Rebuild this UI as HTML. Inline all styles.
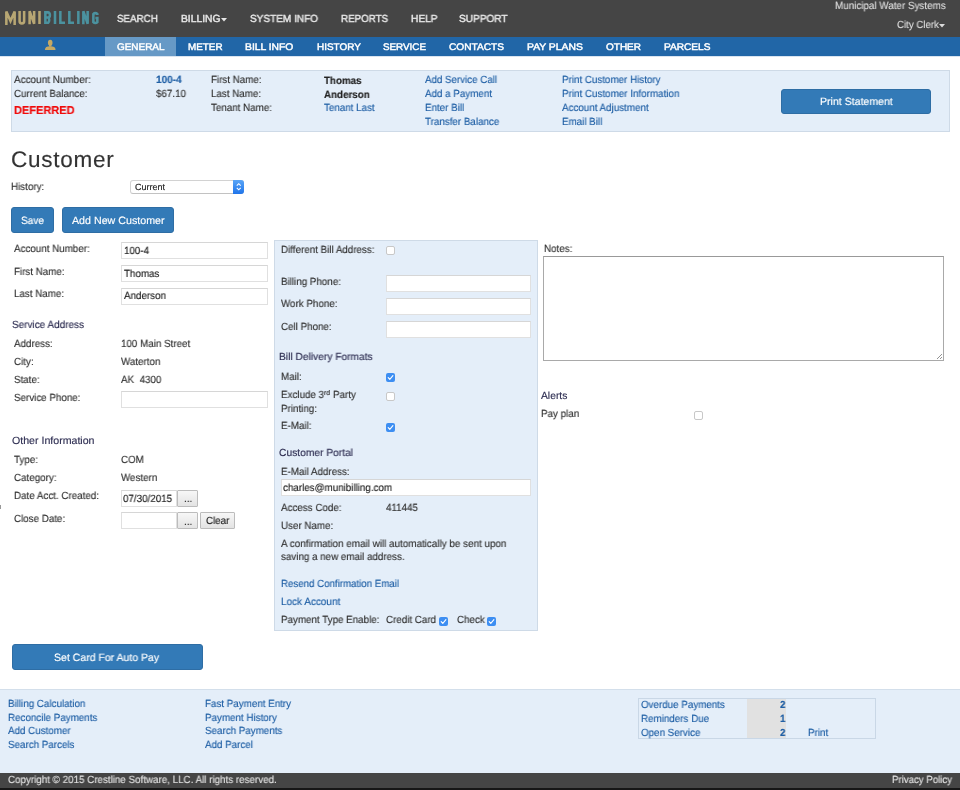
<!DOCTYPE html>
<html><head><meta charset="utf-8"><title>MuniBilling - Customer</title>
<style>
html,body{margin:0;padding:0;}
body{width:960px;height:790px;position:relative;overflow:hidden;background:#fff;font-family:"Liberation Sans",sans-serif;}
.t{position:absolute;white-space:nowrap;line-height:1;transform-origin:0 50%;will-change:transform;text-rendering:geometricPrecision;-webkit-text-stroke:0.15px currentColor;}
.b{position:absolute;box-sizing:border-box;}
.inp{position:absolute;box-sizing:border-box;background:#fff;border:1px solid #e0e0e0;border-top-color:#d6d6d6;}
.btn{position:absolute;box-sizing:border-box;background:#337ab7;border:1px solid #2e6da4;border-radius:3px;}
.cb{position:absolute;box-sizing:border-box;width:9px;height:9px;border-radius:2px;background:#fff;border:1px solid #c8c8c8;}
.cbc{position:absolute;box-sizing:border-box;width:9px;height:9px;border-radius:2px;background:#3d8ef2;}
.sbtn{position:absolute;box-sizing:border-box;background:linear-gradient(#f7f7f7,#e3e3e3);border:1px solid #bcbcbc;border-radius:1px;}
</style></head><body>
<!-- header -->
<div class="b" style="left:0;top:0;width:960px;height:37px;background:#454545;"></div>
<svg style="position:absolute;left:0;top:0" width="110" height="37">
<g fill="none" stroke-width="2.55" stroke-linejoin="miter">
<path stroke="#b7a673" d="M6.35 25 V11.4 L10.5 21 L14.65 11.4 V25 M19.6 11 V21.3 A2.275 2.1 0 0 0 24.15 21.3 V11 M29.6 24.2 V11.2 L34.15 23.8 V11 M39.5 11 V24"/>
<path stroke="#4b929f" d="M45.35 11 V24 M45.35 12.35 H48 A1.9 2.6 0 0 1 48 17.55 H45.35 M45.35 17.55 H48.2 A1.95 2.9 0 0 1 48.2 22.65 H45.35 M55 11 V24 M60.35 11 V24 M60.35 22.65 H65 M69.35 11 V24 M69.35 22.65 H74 M78.35 11 V24 M83.35 24.2 V11.2 L87.65 23.8 V11 M97.35 15 V14 A2.65 2.6 0 0 0 93.35 14 V22.2 A2.65 2.6 0 0 0 97.35 22.2 V18 H95.4"/>
</g>
</svg>
<svg style="position:absolute;left:221px;top:18px" width="8" height="4"><path d="M0 0H6L3 3.5Z" fill="#e6e6e6"/></svg>
<svg style="position:absolute;left:939px;top:23.5px" width="8" height="4"><path d="M0 0H6L3 3.5Z" fill="#dcdcdc"/></svg>
<!-- nav -->
<div class="b" style="left:0;top:37px;width:960px;height:19px;background:#2166a7;"></div>
<div class="b" style="left:0;top:56px;width:960px;height:1px;background:#d9e4f0;"></div>
<div class="b" style="left:105px;top:37px;width:71px;height:19px;background:#6699c6;"></div>
<svg style="position:absolute;left:44px;top:39px" width="13" height="12">
  <ellipse cx="6.2" cy="3.7" rx="2.3" ry="3" fill="#c6a964"/>
  <path d="M0.9 11 C0.9 8.2 2.8 7.2 6.2 7.2 C9.6 7.2 11.6 8.2 11.6 11 Z" fill="#c6a964"/>
  <rect x="5" y="6" width="2.4" height="1.6" fill="#c6a964"/>
</svg>
<div class="b" style="left:0;top:505px;width:1px;height:4px;background:#999;"></div>
<!-- top panel -->
<div class="b" style="left:11px;top:70px;width:939px;height:62px;background:#e4eef9;border:1px solid #cedae7;"></div>
<div class="btn" style="left:781px;top:88.5px;width:150px;height:25.5px;"></div>
<!-- history select -->
<div class="b" style="left:129.5px;top:180px;width:114.5px;height:13.5px;background:#fff;border:1px solid #d2d2d2;border-bottom-color:#c2c2c2;border-radius:3px;"></div>
<div class="b" style="left:232.5px;top:180px;width:11.5px;height:13.5px;background:linear-gradient(#5aa5f7,#1f74ea);border-radius:0 3px 3px 0;"></div>
<svg style="position:absolute;left:232.5px;top:180px" width="11.5" height="13.5"><path d="M3.8 5.6L5.75 3.7L7.7 5.6M3.8 7.9L5.75 9.8L7.7 7.9" stroke="#fff" stroke-width="1.15" fill="none"/></svg>
<div class="btn" style="left:11px;top:207px;width:43px;height:25.5px;"></div>
<div class="btn" style="left:62.3px;top:207px;width:111.7px;height:25.5px;"></div>
<!-- left inputs -->
<div class="inp" style="left:121px;top:242.4px;width:147px;height:17px;"></div>
<div class="inp" style="left:121px;top:265px;width:147px;height:17.4px;"></div>
<div class="inp" style="left:121px;top:287.6px;width:147px;height:17px;"></div>
<div class="inp" style="left:121px;top:391.2px;width:147px;height:17px;"></div>
<div class="inp" style="left:121px;top:490px;width:56px;height:17px;"></div>
<div class="sbtn" style="left:177px;top:490px;width:21px;height:17px;"></div>
<div class="inp" style="left:121px;top:512.3px;width:56px;height:17.2px;"></div>
<div class="sbtn" style="left:177px;top:512.3px;width:21px;height:17.2px;"></div>
<div class="sbtn" style="left:200px;top:512.3px;width:35px;height:17.2px;"></div>
<!-- middle panel -->
<div class="b" style="left:274px;top:240px;width:263.5px;height:391px;background:#e4eef9;border:1px solid #cedae7;"></div>
<div class="cb" style="left:385.8px;top:246.3px;"></div>
<div class="inp" style="left:386px;top:275px;width:144.6px;height:17.4px;"></div>
<div class="inp" style="left:386px;top:298px;width:144.6px;height:17.3px;"></div>
<div class="inp" style="left:386px;top:320.7px;width:144.6px;height:17px;"></div>
<div class="cbc" style="left:385.8px;top:373.2px;"><svg width="9" height="9" style="position:absolute;left:0;top:0"><path d="M2.2 4.6L3.8 6.3L6.9 2.6" stroke="#fff" stroke-width="1.1" fill="none" stroke-linecap="round" stroke-linejoin="round"/></svg></div>
<div class="cb" style="left:385.8px;top:391.5px;"></div>
<div class="cbc" style="left:385.8px;top:423px;"><svg width="9" height="9" style="position:absolute;left:0;top:0"><path d="M2.2 4.6L3.8 6.3L6.9 2.6" stroke="#fff" stroke-width="1.1" fill="none" stroke-linecap="round" stroke-linejoin="round"/></svg></div>
<div class="inp" style="left:281.3px;top:479.4px;width:249.3px;height:16.8px;"></div>
<div class="cbc" style="left:439.3px;top:617px;"><svg width="9" height="9" style="position:absolute;left:0;top:0"><path d="M2.2 4.6L3.8 6.3L6.9 2.6" stroke="#fff" stroke-width="1.1" fill="none" stroke-linecap="round" stroke-linejoin="round"/></svg></div>
<div class="cbc" style="left:487px;top:617px;"><svg width="9" height="9" style="position:absolute;left:0;top:0"><path d="M2.2 4.6L3.8 6.3L6.9 2.6" stroke="#fff" stroke-width="1.1" fill="none" stroke-linecap="round" stroke-linejoin="round"/></svg></div>
<!-- right -->
<div class="b" style="left:543px;top:256px;width:401px;height:105px;background:#fff;border:1px solid #a9a9a9;border-top-color:#999;"></div>
<svg style="position:absolute;left:936px;top:353px" width="7" height="7"><path d="M1 6L6 1M4 6L6 4" stroke="#777" stroke-width="0.8"/></svg>
<div class="cb" style="left:694px;top:410.7px;"></div>
<!-- set card -->
<div class="btn" style="left:11.5px;top:644.3px;width:191.3px;height:25.7px;"></div>
<!-- footer -->
<div class="b" style="left:0;top:688.5px;width:960px;height:85px;background:#e4eef9;border-top:1px solid #d3dfeb;"></div>
<div class="b" style="left:638.4px;top:698.4px;width:237.3px;height:40.7px;border:1px solid #c9d7e6;"></div>
<div class="b" style="left:746.8px;top:699.4px;width:39.6px;height:38.7px;background:#e1e1e1;"></div>
<div class="b" style="left:0;top:773px;width:960px;height:17px;background:#454545;"></div>
<div class="b" style="left:0;top:787.5px;width:960px;height:2.5px;background:#161616;"></div>

<div class="t" style="left:116.70px;top:15.00px;font-size:10.3px;color:#e6e6e6;transform:scaleX(0.9508);-webkit-text-stroke:0.45px currentColor;">SEARCH</div>
<div class="t" style="left:180.60px;top:15.00px;font-size:10.3px;color:#e6e6e6;transform:scaleX(1.0003);-webkit-text-stroke:0.45px currentColor;">BILLING</div>
<div class="t" style="left:250.00px;top:15.00px;font-size:10.3px;color:#e6e6e6;transform:scaleX(0.9743);-webkit-text-stroke:0.45px currentColor;">SYSTEM INFO</div>
<div class="t" style="left:341.00px;top:15.00px;font-size:10.3px;color:#e6e6e6;transform:scaleX(0.9478);-webkit-text-stroke:0.45px currentColor;">REPORTS</div>
<div class="t" style="left:411.00px;top:15.00px;font-size:10.3px;color:#e6e6e6;transform:scaleX(0.9852);-webkit-text-stroke:0.45px currentColor;">HELP</div>
<div class="t" style="left:459.00px;top:15.00px;font-size:10.3px;color:#e6e6e6;transform:scaleX(0.9801);-webkit-text-stroke:0.45px currentColor;">SUPPORT</div>
<div class="t" style="left:835.00px;top:2.00px;font-size:10.4px;color:#dcdcdc;transform:scaleX(0.9475);">Municipal Water Systems</div>
<div class="t" style="left:896.60px;top:21.00px;font-size:10.4px;color:#dcdcdc;transform:scaleX(0.9328);">City Clerk</div>
<div class="t" style="left:116.70px;top:43.00px;font-size:9.6px;color:#ffffff;transform:scaleX(1.0360);-webkit-text-stroke:0.45px currentColor;">GENERAL</div>
<div class="t" style="left:187.50px;top:43.00px;font-size:9.6px;color:#ffffff;transform:scaleX(1.0275);-webkit-text-stroke:0.45px currentColor;">METER</div>
<div class="t" style="left:245.00px;top:43.00px;font-size:9.6px;color:#ffffff;transform:scaleX(1.0757);-webkit-text-stroke:0.45px currentColor;">BILL INFO</div>
<div class="t" style="left:316.60px;top:43.00px;font-size:9.6px;color:#ffffff;transform:scaleX(1.0356);-webkit-text-stroke:0.45px currentColor;">HISTORY</div>
<div class="t" style="left:383.00px;top:43.00px;font-size:9.6px;color:#ffffff;transform:scaleX(1.0252);-webkit-text-stroke:0.45px currentColor;">SERVICE</div>
<div class="t" style="left:448.70px;top:43.00px;font-size:9.6px;color:#ffffff;transform:scaleX(1.0566);-webkit-text-stroke:0.45px currentColor;">CONTACTS</div>
<div class="t" style="left:527.00px;top:43.00px;font-size:9.6px;color:#ffffff;transform:scaleX(1.0790);-webkit-text-stroke:0.45px currentColor;">PAY PLANS</div>
<div class="t" style="left:605.80px;top:43.00px;font-size:9.6px;color:#ffffff;transform:scaleX(1.0423);-webkit-text-stroke:0.45px currentColor;">OTHER</div>
<div class="t" style="left:663.50px;top:43.00px;font-size:9.6px;color:#ffffff;transform:scaleX(1.0550);-webkit-text-stroke:0.45px currentColor;">PARCELS</div>
<div class="t" style="left:14.10px;top:76.00px;font-size:10.4px;color:#333;transform:scaleX(0.9561);">Account Number:</div>
<div class="t" style="left:14.10px;top:90.00px;font-size:10.4px;color:#333;transform:scaleX(0.9429);">Current Balance:</div>
<div class="t" style="left:14.20px;top:106.00px;font-size:11.5px;color:#f00a0a;font-weight:bold;transform:scaleX(0.9564);">DEFERRED</div>
<div class="t" style="left:156.30px;top:76.00px;font-size:10.4px;color:#1f5fa5;font-weight:bold;transform:scaleX(0.9671);">100-4</div>
<div class="t" style="left:156.30px;top:90.00px;font-size:10.4px;color:#333;transform:scaleX(0.9440);">$67.10</div>
<div class="t" style="left:211.00px;top:76.00px;font-size:10.4px;color:#333;transform:scaleX(0.9429);">First Name:</div>
<div class="t" style="left:211.00px;top:90.00px;font-size:10.4px;color:#333;transform:scaleX(0.9429);">Last Name:</div>
<div class="t" style="left:211.00px;top:104.00px;font-size:10.4px;color:#333;transform:scaleX(0.9429);">Tenant Name:</div>
<div class="t" style="left:324.30px;top:77.00px;font-size:10.4px;color:#222;font-weight:bold;transform:scaleX(0.9429);">Thomas</div>
<div class="t" style="left:324.30px;top:91.00px;font-size:10.4px;color:#222;font-weight:bold;transform:scaleX(0.9429);">Anderson</div>
<div class="t" style="left:324.30px;top:104.00px;font-size:10.4px;color:#1f5fa5;transform:scaleX(0.9437);">Tenant Last</div>
<div class="t" style="left:425.00px;top:76.00px;font-size:10.4px;color:#1f5fa5;transform:scaleX(0.9374);">Add Service Call</div>
<div class="t" style="left:425.00px;top:90.00px;font-size:10.4px;color:#1f5fa5;transform:scaleX(0.9429);">Add a Payment</div>
<div class="t" style="left:425.00px;top:104.00px;font-size:10.4px;color:#1f5fa5;transform:scaleX(0.9429);">Enter Bill</div>
<div class="t" style="left:425.00px;top:118.00px;font-size:10.4px;color:#1f5fa5;transform:scaleX(0.9429);">Transfer Balance</div>
<div class="t" style="left:561.60px;top:76.00px;font-size:10.4px;color:#1f5fa5;transform:scaleX(0.9429);">Print Customer History</div>
<div class="t" style="left:561.60px;top:90.00px;font-size:10.4px;color:#1f5fa5;transform:scaleX(0.9456);">Print Customer Information</div>
<div class="t" style="left:561.60px;top:104.00px;font-size:10.4px;color:#1f5fa5;transform:scaleX(0.9429);">Account Adjustment</div>
<div class="t" style="left:561.60px;top:118.00px;font-size:10.4px;color:#1f5fa5;transform:scaleX(0.9429);">Email Bill</div>
<div class="t" style="left:820.00px;top:97.00px;font-size:10.6px;color:#fff;transform:scaleX(0.9957);">Print Statement</div>
<div class="t" style="left:11.00px;top:149.00px;font-size:22.5px;color:#333;letter-spacing:0.75px;">Customer</div>
<div class="t" style="left:11.40px;top:183.00px;font-size:10.4px;color:#333;transform:scaleX(0.9429);">History:</div>
<div class="t" style="left:135.00px;top:183.00px;font-size:9px;color:#222;">Current</div>
<div class="t" style="left:21.00px;top:216.00px;font-size:10.6px;color:#fff;transform:scaleX(0.9525);">Save</div>
<div class="t" style="left:72.00px;top:216.00px;font-size:10.6px;color:#fff;transform:scaleX(1.0071);">Add New Customer</div>
<div class="t" style="left:13.70px;top:245.00px;font-size:10.4px;color:#333;transform:scaleX(0.9429);">Account Number:</div>
<div class="t" style="left:13.70px;top:268.00px;font-size:10.4px;color:#333;transform:scaleX(0.9429);">First Name:</div>
<div class="t" style="left:13.70px;top:290.00px;font-size:10.4px;color:#333;transform:scaleX(0.9429);">Last Name:</div>
<div class="t" style="left:123.80px;top:247.00px;font-size:10.4px;color:#222;transform:scaleX(0.9429);">100-4</div>
<div class="t" style="left:123.80px;top:270.00px;font-size:10.4px;color:#222;transform:scaleX(0.9429);">Thomas</div>
<div class="t" style="left:123.80px;top:292.00px;font-size:10.4px;color:#222;transform:scaleX(0.9429);">Anderson</div>
<div class="t" style="left:11.70px;top:321.00px;font-size:10.4px;color:#2e2e52;transform:scaleX(0.9583);">Service Address</div>
<div class="t" style="left:13.70px;top:340.00px;font-size:10.4px;color:#333;transform:scaleX(0.9429);">Address:</div>
<div class="t" style="left:13.70px;top:358.00px;font-size:10.4px;color:#333;transform:scaleX(0.9429);">City:</div>
<div class="t" style="left:13.70px;top:376.00px;font-size:10.4px;color:#333;transform:scaleX(0.9429);">State:</div>
<div class="t" style="left:13.70px;top:394.00px;font-size:10.4px;color:#333;transform:scaleX(0.9429);">Service Phone:</div>
<div class="t" style="left:121.00px;top:340.00px;font-size:10.4px;color:#333;transform:scaleX(0.9429);">100 Main Street</div>
<div class="t" style="left:121.00px;top:358.00px;font-size:10.4px;color:#333;transform:scaleX(0.9429);">Waterton</div>
<div class="t" style="left:121.00px;top:376.00px;font-size:10.4px;color:#333;transform:scaleX(0.9429);white-space:pre;">AK  4300</div>
<div class="t" style="left:11.70px;top:437.00px;font-size:10.4px;color:#2e2e52;transform:scaleX(1.0204);">Other Information</div>
<div class="t" style="left:13.70px;top:456.00px;font-size:10.4px;color:#333;transform:scaleX(0.9429);">Type:</div>
<div class="t" style="left:13.70px;top:474.00px;font-size:10.4px;color:#333;transform:scaleX(0.9429);">Category:</div>
<div class="t" style="left:13.70px;top:492.00px;font-size:10.4px;color:#333;transform:scaleX(0.9429);">Date Acct. Created:</div>
<div class="t" style="left:13.70px;top:515.00px;font-size:10.4px;color:#333;transform:scaleX(0.9429);">Close Date:</div>
<div class="t" style="left:121.00px;top:456.00px;font-size:10.4px;color:#333;transform:scaleX(0.9429);">COM</div>
<div class="t" style="left:121.00px;top:474.00px;font-size:10.4px;color:#333;transform:scaleX(0.9429);">Western</div>
<div class="t" style="left:123.00px;top:495.00px;font-size:10.4px;color:#222;transform:scaleX(0.9429);">07/30/2015</div>
<div class="t" style="left:183.50px;top:495.00px;font-size:10.4px;color:#222;transform:scaleX(0.9429);">...</div>
<div class="t" style="left:183.50px;top:518.00px;font-size:10.4px;color:#222;transform:scaleX(0.9429);">...</div>
<div class="t" style="left:206.00px;top:517.00px;font-size:10.4px;color:#222;transform:scaleX(0.9429);">Clear</div>
<div class="t" style="left:280.75px;top:246.00px;font-size:10.4px;color:#333;transform:scaleX(0.9429);">Different Bill Address:</div>
<div class="t" style="left:280.75px;top:278.00px;font-size:10.4px;color:#333;transform:scaleX(0.9429);">Billing Phone:</div>
<div class="t" style="left:280.75px;top:300.00px;font-size:10.4px;color:#333;transform:scaleX(0.9429);">Work Phone:</div>
<div class="t" style="left:280.75px;top:323.00px;font-size:10.4px;color:#333;transform:scaleX(0.9429);">Cell Phone:</div>
<div class="t" style="left:278.90px;top:353.00px;font-size:10.3px;color:#2e2e52;transform:scaleX(0.9915);">Bill Delivery Formats</div>
<div class="t" style="left:280.75px;top:373.00px;font-size:10.4px;color:#333;transform:scaleX(0.9429);">Mail:</div>
<div class="t" style="left:280.75px;top:391.00px;font-size:10.4px;color:#333;transform:scaleX(0.9429);">Exclude 3</div>
<div class="t" style="left:280.75px;top:405.00px;font-size:10.4px;color:#333;transform:scaleX(0.9429);">Printing:</div>
<div class="t" style="left:280.75px;top:422.00px;font-size:10.4px;color:#333;transform:scaleX(0.9429);">E-Mail:</div>
<div class="t" style="left:278.90px;top:449.00px;font-size:10.3px;color:#2e2e52;transform:scaleX(0.9947);">Customer Portal</div>
<div class="t" style="left:280.75px;top:468.00px;font-size:10.4px;color:#333;transform:scaleX(0.9429);">E-Mail Address:</div>
<div class="t" style="left:283.20px;top:484.00px;font-size:10.4px;color:#222;transform:scaleX(0.9429);">charles@munibilling.com</div>
<div class="t" style="left:280.75px;top:504.00px;font-size:10.4px;color:#333;transform:scaleX(0.9429);">Access Code:</div>
<div class="t" style="left:386.00px;top:504.00px;font-size:10.4px;color:#333;transform:scaleX(0.9429);">411445</div>
<div class="t" style="left:280.75px;top:522.00px;font-size:10.4px;color:#333;transform:scaleX(0.9429);">User Name:</div>
<div class="t" style="left:281.00px;top:540.00px;font-size:10.4px;color:#333;transform:scaleX(0.9498);">A confirmation email will automatically be sent upon</div>
<div class="t" style="left:281.00px;top:553.00px;font-size:10.4px;color:#333;transform:scaleX(0.9429);">saving a new email address.</div>
<div class="t" style="left:281.00px;top:580.00px;font-size:10.4px;color:#1f5fa5;transform:scaleX(0.9330);">Resend Confirmation Email</div>
<div class="t" style="left:281.00px;top:598.00px;font-size:10.4px;color:#1f5fa5;transform:scaleX(0.9587);">Lock Account</div>
<div class="t" style="left:281.00px;top:616.00px;font-size:10.4px;color:#333;transform:scaleX(0.9429);">Payment Type Enable:</div>
<div class="t" style="left:386.00px;top:616.00px;font-size:10.4px;color:#333;transform:scaleX(0.9429);">Credit Card</div>
<div class="t" style="left:456.50px;top:616.00px;font-size:10.4px;color:#333;transform:scaleX(0.9429);">Check</div>
<div class="t" style="left:543.90px;top:245.00px;font-size:10.4px;color:#333;transform:scaleX(0.9429);">Notes:</div>
<div class="t" style="left:541.40px;top:392.00px;font-size:10.3px;color:#2e2e52;">Alerts</div>
<div class="t" style="left:541.40px;top:410.00px;font-size:10.4px;color:#333;transform:scaleX(0.9429);">Pay plan</div>
<div class="t" style="left:54.30px;top:653.00px;font-size:10.6px;color:#fff;transform:scaleX(0.9918);">Set Card For Auto Pay</div>
<div class="t" style="left:8.00px;top:700.00px;font-size:10.4px;color:#1f5fa5;transform:scaleX(0.9429);">Billing Calculation</div>
<div class="t" style="left:8.00px;top:714.00px;font-size:10.4px;color:#1f5fa5;transform:scaleX(0.9429);">Reconcile Payments</div>
<div class="t" style="left:8.00px;top:727.00px;font-size:10.4px;color:#1f5fa5;transform:scaleX(0.9429);">Add Customer</div>
<div class="t" style="left:8.00px;top:741.00px;font-size:10.4px;color:#1f5fa5;transform:scaleX(0.9429);">Search Parcels</div>
<div class="t" style="left:205.30px;top:700.00px;font-size:10.4px;color:#1f5fa5;transform:scaleX(0.9429);">Fast Payment Entry</div>
<div class="t" style="left:205.30px;top:714.00px;font-size:10.4px;color:#1f5fa5;transform:scaleX(0.9429);">Payment History</div>
<div class="t" style="left:205.30px;top:727.00px;font-size:10.4px;color:#1f5fa5;transform:scaleX(0.9429);">Search Payments</div>
<div class="t" style="left:205.30px;top:741.00px;font-size:10.4px;color:#1f5fa5;transform:scaleX(0.9429);">Add Parcel</div>
<div class="t" style="left:640.50px;top:701.00px;font-size:10.4px;color:#1f5fa5;transform:scaleX(0.9429);">Overdue Payments</div>
<div class="t" style="left:640.50px;top:715.00px;font-size:10.4px;color:#1f5fa5;transform:scaleX(0.9429);">Reminders Due</div>
<div class="t" style="left:640.50px;top:729.00px;font-size:10.4px;color:#1f5fa5;transform:scaleX(0.9429);">Open Service</div>
<div class="t" style="left:807.70px;top:729.00px;font-size:10.4px;color:#1f5fa5;transform:scaleX(0.9429);">Print</div>
<div class="t" style="left:779.50px;top:701.00px;font-size:10.4px;color:#1f5fa5;font-weight:bold;transform:scaleX(0.9429);">2</div>
<div class="t" style="left:779.50px;top:715.00px;font-size:10.4px;color:#1f5fa5;font-weight:bold;transform:scaleX(0.9429);">1</div>
<div class="t" style="left:779.50px;top:729.00px;font-size:10.4px;color:#1f5fa5;font-weight:bold;transform:scaleX(0.9429);">2</div>
<div class="t" style="left:323.60px;top:391.00px;font-size:6.8px;color:#333;">rd</div>
<div class="t" style="left:332.60px;top:391.00px;font-size:10.4px;color:#333;transform:scaleX(0.9429);">Party</div>
<div class="t" style="left:892.00px;top:776.00px;font-size:10.4px;color:#e0e0e0;transform:scaleX(0.9278);">Privacy Policy</div>
<div class="t" style="left:8.00px;top:776.00px;font-size:10.4px;color:#e0e0e0;transform:scaleX(0.9434);">Copyright © 2015 Crestline Software, LLC. All rights reserved.</div>
</body></html>
